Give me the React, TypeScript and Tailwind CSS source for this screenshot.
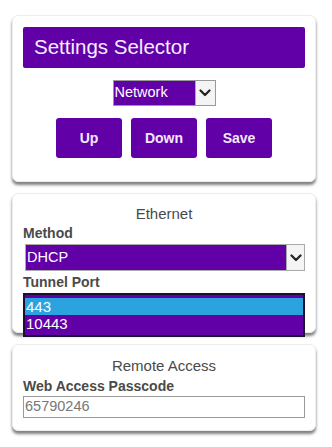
import React from "react";

function Chevron() {
  return (
    <svg width="12" height="8" viewBox="0 0 12 8" fill="none">
      <path d="M1.5 1.5 L6 6 L10.5 1.5" stroke="#222" strokeWidth="2.2" strokeLinecap="round" strokeLinejoin="round" />
    </svg>
  );
}

export default function App() {
  const font = { fontFamily: '"Liberation Sans", Arial, sans-serif' };
  return (
    <div className="w-[332px] h-[447px] bg-white pt-[15px] pl-[12px]" style={font}>
      <div className="w-[304px] flex flex-col gap-[11px]">
        {/* Card 1 */}
        <div className="h-[167px] rounded-[6px] border border-[#ececec] shadow-[0_3px_3px_rgba(0,0,0,0.5)] bg-white px-[10px] pt-[11px] flex flex-col items-center">
          <div className="w-full h-[41px] bg-[#6200a8] rounded-[2px] flex items-center pl-[11px]">
            <span className="text-[#f6eeff] text-[20.5px] leading-none">Settings Selector</span>
          </div>
          <div className="mt-[12px] h-[26px] w-[103px] flex border border-[#999]">
            <div className="flex-1 bg-[#6200a8] text-white text-[14.5px] flex items-center pl-[1px]">Network</div>
            <div className="w-[20px] bg-[#f4f4f4] border-l border-[#aaa] flex items-center justify-center">
              <Chevron />
            </div>
          </div>
          <div className="mt-[12px] flex gap-[9px]">
            {["Up", "Down", "Save"].map((t) => (
              <div key={t} className="w-[66px] h-[40px] rounded-[3px] bg-[#6200a8] text-[#f3e8ff] text-[14px] font-bold flex items-center justify-center">
                {t}
              </div>
            ))}
          </div>
        </div>

        {/* Card 2 */}
        <div className="relative h-[140px] rounded-[6px] border border-[#ececec] shadow-[0_3px_3px_rgba(0,0,0,0.5)] bg-white px-[10px] pt-[11px]">
          <div className="text-center text-[15px] text-[#4a4a4a] leading-[17px]">Ethernet</div>
          <div className="mt-[3px] text-[14px] font-bold text-[#4a4a4a] leading-[17px]">Method</div>
          <div className="mt-[2px] ml-[2px] h-[27px] flex border border-[#aaa]">
            <div className="flex-1 bg-[#6200a8] text-white text-[14.5px] flex items-center pl-[1px]">DHCP</div>
            <div className="w-[18px] bg-[#f4f4f4] border-l border-[#aaa] flex items-center justify-center">
              <Chevron />
            </div>
          </div>
          <div className="mt-[3px] text-[14px] font-bold text-[#4a4a4a] leading-[17px]">Tunnel Port</div>
          <div className="relative z-10 mt-[2px] h-[44px] border-2 border-[#1c1030] bg-[#6200a8] pt-[3px]">
            <div className="h-[17px] bg-[#2aa3df] text-white text-[15px] leading-[17px] pl-[1px]">443</div>
            <div className="h-[18px] text-white text-[15px] leading-[18px] pl-[1px]">10443</div>
          </div>
        </div>

        {/* Card 3 */}
        <div className="h-[87px] rounded-[6px] border border-[#ececec] shadow-[0_3px_3px_rgba(0,0,0,0.5)] bg-white px-[10px] pt-[12px]">
          <div className="text-center text-[15px] text-[#4a4a4a] leading-[17px]">Remote Access</div>
          <div className="mt-[4px] text-[14px] font-bold text-[#4a4a4a] leading-[17px]">Web Access Passcode</div>
          <div className="mt-[1px] h-[22px] border border-[#999] bg-white text-[14.5px] text-[#777] flex items-center pl-[1px]">65790246</div>
        </div>
      </div>
    </div>
  );
}
